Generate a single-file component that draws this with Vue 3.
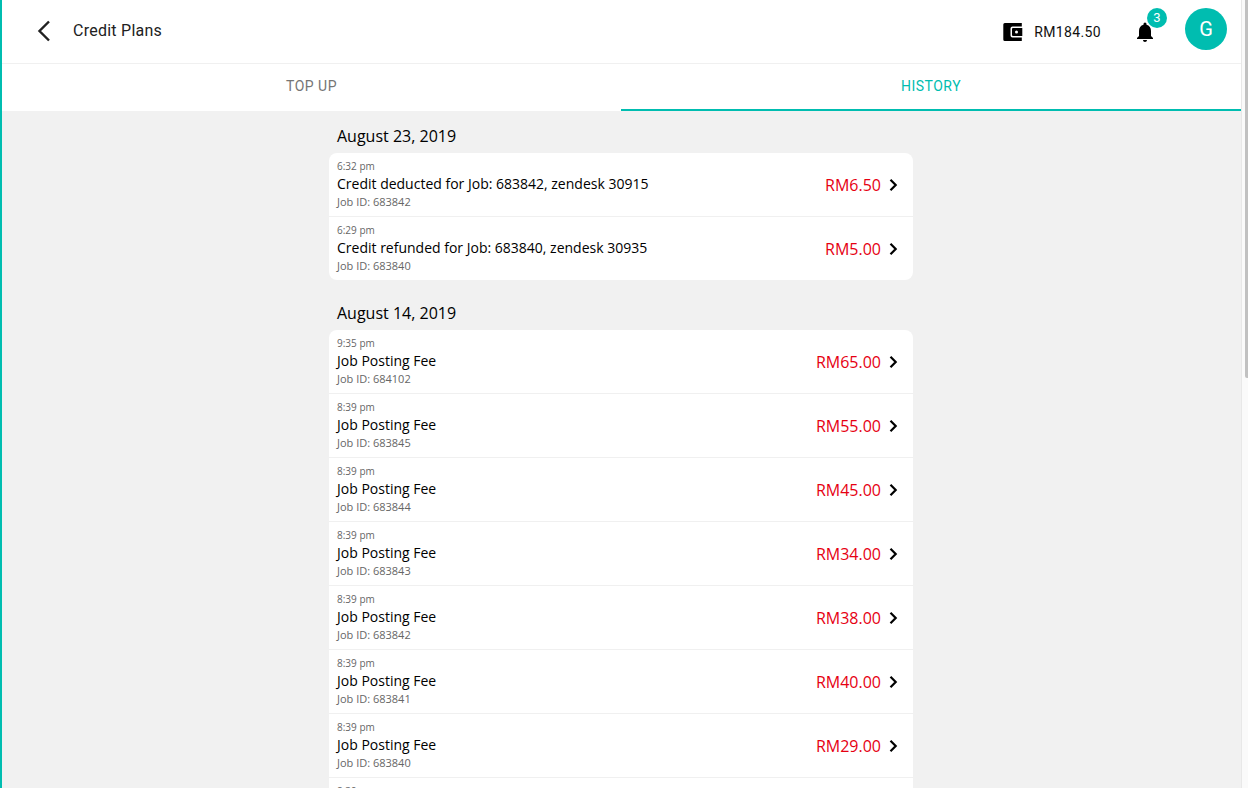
<script setup>
const groups = [
  { date: 'August 23, 2019', rows: [
    { time: '6:32 pm', title: 'Credit deducted for Job: 683842, zendesk 30915', id: '683842', amt: 'RM6.50' },
    { time: '6:29 pm', title: 'Credit refunded for Job: 683840, zendesk 30935', id: '683840', amt: 'RM5.00' },
  ]},
  { date: 'August 14, 2019', rows: [
    { time: '9:35 pm', title: 'Job Posting Fee', id: '684102', amt: 'RM65.00' },
    { time: '8:39 pm', title: 'Job Posting Fee', id: '683845', amt: 'RM55.00' },
    { time: '8:39 pm', title: 'Job Posting Fee', id: '683844', amt: 'RM45.00' },
    { time: '8:39 pm', title: 'Job Posting Fee', id: '683843', amt: 'RM34.00' },
    { time: '8:39 pm', title: 'Job Posting Fee', id: '683842', amt: 'RM38.00' },
    { time: '8:39 pm', title: 'Job Posting Fee', id: '683841', amt: 'RM40.00' },
    { time: '8:39 pm', title: 'Job Posting Fee', id: '683840', amt: 'RM29.00' },
    { time: '8:39 pm', title: 'Job Posting Fee', id: '683839', amt: 'RM31.00' },
  ]},
]
</script>

<template>
  <div class="page">
    <div class="main">
      <header class="header">
        <button class="back" aria-label="Back">
          <svg width="24" height="24" viewBox="0 0 24 24"><path d="M19 2.500 9.500 12l9.500 9.500" fill="none" stroke="#212121" stroke-width="2.400"/></svg>
        </button>
        <h1 class="title">Credit Plans</h1>
        <div class="spacer"></div>
        <div class="wallet">
          <svg width="20" height="20" viewBox="0 0 20 20"><path fill="#000" fill-rule="evenodd" d="M1.800 1h17v3.500H9.500a2 2 0 0 0-2 2v7a2 2 0 0 0 2 2h9.300V19h-17A1.500 1.500 0 0 1 .300 17.500v-15A1.500 1.500 0 0 1 1.800 1Zm8.200 5h9.300v8H10a1 1 0 0 1-1-1V7a1 1 0 0 1 1-1Zm3.500 2.500a1.500 1.500 0 1 0 0 3 1.500 1.500 0 0 0 0-3Z"/></svg>
          <span>RM184.50</span>
        </div>
        <div class="bell">
          <svg width="24" height="24" viewBox="0 0 24 24"><path fill="#000" d="M12 22c1.100 0 2-.9 2-2h-4c0 1.100.9 2 2 2Zm6-6v-5c0-3.100-1.600-5.600-4.500-6.300V4a1.500 1.500 0 0 0-3 0v.7C7.600 5.400 6 7.900 6 11v5l-2 2v1h16v-1l-2-2Z"/></svg>
          <span class="badge">3</span>
        </div>
        <div class="avatar">G</div>
      </header>
      <nav class="tabs">
        <div class="tab first">TOP UP</div>
        <div class="tab active">HISTORY</div>
      </nav>
      <main class="content">
        <section v-for="g in groups" :key="g.date" class="group">
          <h2 class="date">{{ g.date }}</h2>
          <ul class="card">
            <li v-for="(r, i) in g.rows" :key="i" class="row">
              <div class="info">
                <div class="time">{{ r.time }}</div>
                <div class="name">{{ r.title }}</div>
                <div class="job">Job ID: {{ r.id }}</div>
              </div>
              <div class="amount">{{ r.amt }}</div>
              <svg class="chev" width="24" height="24" viewBox="0 0 24 24"><path d="m8.500 6.800 5.200 5.200-5.200 5.200" fill="none" stroke="#000" stroke-width="2.200"/></svg>
            </li>
          </ul>
        </section>
      </main>
    </div>
    <div class="scrollbar"><div class="thumb"></div></div>
  </div>
</template>

<style>
html, body { margin: 0; height: 100%; overflow: hidden; }
</style>

<style scoped>
.page {
  display: flex;
  height: 788px;
  overflow: hidden;
  border-left: 2px solid #00bdb0;
  box-sizing: border-box;
  background: #f1f1f1;
}
.main { flex: 1; min-width: 0; display: flex; flex-direction: column; }
.header {
  height: 64px;
  box-sizing: border-box;
  flex: none;
  background: #fff;
  border-bottom: 1px solid #f0f0f0;
  display: flex;
  align-items: center;
  padding: 0 14px 2px 28px;
  font-family: Roboto, "Liberation Sans", sans-serif;
}
.back { border: 0; background: none; padding: 0; width: 24px; height: 24px; margin-right: 19px; display: block; }
.title { margin: 0; font-size: 16px; font-weight: 400; letter-spacing: .25px; color: #212121; }
.spacer { flex: 1; }
.wallet { display: flex; align-items: center; gap: 11px; font-size: 14px; letter-spacing: .35px; color: #111; margin-top: 3px; }
.wallet svg { display: block; }
.bell { position: relative; width: 24px; height: 24px; margin-left: 32px; margin-top: 3px; }
.bell svg { display: block; }
.badge {
  position: absolute;
  left: 14px;
  top: -12px;
  width: 20px;
  height: 20px;
  border-radius: 50%;
  background: #00bdb0;
  color: #fff;
  font-size: 13px;
  line-height: 20px;
  text-align: center;
}
.avatar {
  width: 42px;
  height: 42px;
  border-radius: 50%;
  background: #00bdb0;
  color: #fff;
  font-size: 20px;
  line-height: 42px;
  text-align: center;
  margin-left: 28px;
  margin-top: -4px;
}
.tabs { display: flex; height: 47px; flex: none; background: #fff; font-family: Roboto, "Liberation Sans", sans-serif; }
.tab {
  flex: 1;
  text-align: center;
  font-size: 14px;
  letter-spacing: .5px;
  line-height: 45px;
  color: #757575;
  border-bottom: 2px solid transparent;
}
.tab.first { flex: 0 0 619px; }
.tab.active { color: #00bdb0; border-bottom-color: #00bdb0; }
.content {
  width: 584px;
  margin-left: 327px;
  font-family: "Open Sans", "Liberation Sans", sans-serif;
}
.group { margin-bottom: 8px; }
.date { margin: 0; padding: 14px 8px 6px; font-size: 16px; line-height: 22px; font-weight: 400; color: #000; height: 42px; box-sizing: border-box; }
.card { list-style: none; margin: 0; padding: 0; background: #fff; border-radius: 8px; overflow: hidden; }
.row {
  height: 64px;
  box-sizing: border-box;
  display: flex;
  align-items: center;
  padding: 0 7px 0 8px;
  border-bottom: 1px solid #f0f0f0;
}
.row:last-child { border-bottom: 0; height: 63px; }
.info { flex: 1; min-width: 0; padding-bottom: 2px; }
.time { font-size: 10px; line-height: 14px; color: #666; }
.name { font-size: 14px; line-height: 22px; color: #000; }
.job { font-size: 11px; line-height: 14px; color: #666; }
.amount { font-size: 16px; color: #e60012; }
.chev { display: block; margin-left: 1px; }
.scrollbar { width: 7px; flex: none; background: #fafafa; border-left: 1px solid #e8e8e8; box-sizing: border-box; display: flex; justify-content: flex-end; }
.thumb { width: 3px; height: 378px; background: #c1c1c1; border-radius: 0 0 0 2px; }
</style>
